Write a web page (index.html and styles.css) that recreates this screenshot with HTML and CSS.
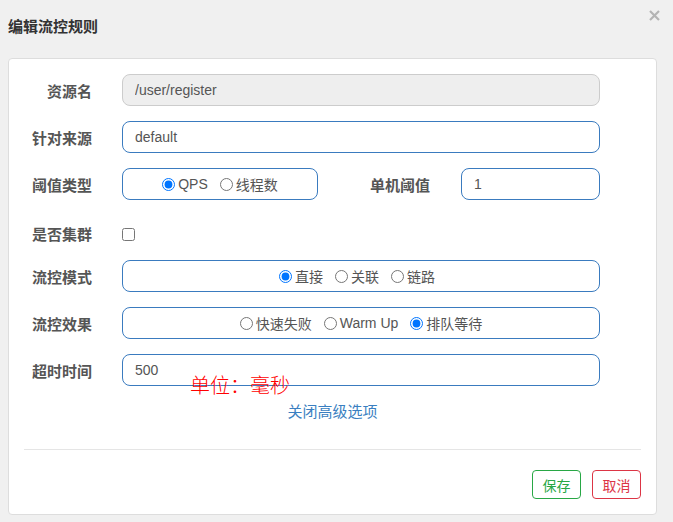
FILE: index.html
```html
<!DOCTYPE html>
<html lang="zh-CN">
<head>
<meta charset="utf-8">
<title>编辑流控规则</title>
<link rel="stylesheet" href="styles.css">
</head>
<body>
<div class="dialog">
  <div class="header">
    <div class="title">编辑流控规则</div>
    <svg class="close" width="11" height="11" viewBox="0 0 11 11"><path d="M1 1 L10 10 M10 1 L1 10" stroke="#b4b4b4" stroke-width="2.2" fill="none"/></svg>
  </div>
  <div class="card">
    <div class="row">
      <label class="label">资源名</label>
      <div class="field"><input class="input disabled" type="text" value="/user/register" disabled></div>
    </div>
    <div class="row">
      <label class="label">针对来源</label>
      <div class="field"><input class="input" type="text" value="default"></div>
    </div>
    <div class="row">
      <label class="label">阈值类型</label>
      <div class="box box-small">
        <label class="opt"><input type="radio" name="t" checked>QPS</label>
        <label class="opt"><input type="radio" name="t">线程数</label>
      </div>
      <label class="label label2">单机阈值</label>
      <input class="input input-small" type="text" value="1">
    </div>
    <div class="row row-check">
      <label class="label">是否集群</label>
      <input class="check" type="checkbox">
    </div>
    <div class="row">
      <label class="label">流控模式</label>
      <div class="box box-wide box-mode">
        <label class="opt"><input type="radio" name="m" checked>直接</label>
        <label class="opt"><input type="radio" name="m">关联</label>
        <label class="opt"><input type="radio" name="m">链路</label>
      </div>
    </div>
    <div class="row">
      <label class="label">流控效果</label>
      <div class="box box-wide">
        <label class="opt"><input type="radio" name="e">快速失败</label>
        <label class="opt"><input type="radio" name="e">Warm Up</label>
        <label class="opt"><input type="radio" name="e" checked>排队等待</label>
      </div>
    </div>
    <div class="row row-last">
      <label class="label">超时时间</label>
      <div class="field">
        <input class="input" type="text" value="500">
        <span class="unit">单位：毫秒</span>
      </div>
    </div>
    <div class="more"><a class="link" href="#">关闭高级选项</a></div>
    <div class="divider"></div>
    <div class="footer">
      <button class="btn btn-save">保存</button>
      <button class="btn btn-cancel">取消</button>
    </div>
  </div>
</div>
</body>
</html>
```

FILE: styles.css
```css
* { box-sizing: border-box; }
html, body { margin: 0; padding: 0; }
body {
  background: #f0f0f0;
  font-family: "Liberation Sans", "Noto Sans CJK SC", sans-serif;
  font-size: 14px;
  color: #555;
  width: 673px;
  height: 522px;
  overflow: hidden;
}
.dialog { padding: 0 0 0 8px; }
.header {
  display: flex;
  justify-content: space-between;
  align-items: flex-start;
  height: 58px;
}
.title {
  margin-top: 18px;
  font-size: 15px;
  line-height: 18px;
  font-weight: bold;
  color: #333;
}
.close { margin-top: 10px; margin-right: 13px; }
.card {
  width: 649px;
  height: 457px;
  background: #fff;
  border: 1px solid #ddd;
  border-radius: 4px;
  padding: 15px 15px;
}
.row {
  display: flex;
  align-items: center;
  height: 32px;
  margin-bottom: 15px;
}
.row-check { height: 33px; padding-top: 3px; margin-bottom: 12px; }
.row-last { margin-bottom: 0; }
.label {
  width: 68px;
  text-align: right;
  font-size: 15px;
  font-weight: bold;
  color: #555;
  margin-right: 30px;
  white-space: nowrap;
}
.label2 { width: 112px; margin-right: 31px; }
.field { position: relative; width: 478px; height: 32px; }
.input {
  width: 478px;
  height: 32px;
  border: 1px solid #3a7bbf;
  border-radius: 8px;
  padding: 0 12px;
  font-family: "Liberation Sans", "Noto Sans CJK SC", sans-serif;
  font-size: 14px;
  color: #555;
  background: #fff;
  outline: none;
}
.input.disabled {
  background: #eee;
  border-color: #ccc;
  color: #555;
}
.input-small { width: 139px; }
.box {
  height: 32px;
  border: 1px solid #3a7bbf;
  border-radius: 8px;
  display: flex;
  align-items: center;
  justify-content: center;
  gap: 12px;
}
.box-small { width: 196px; }
.box-wide { width: 478px; }
.box-mode { padding-right: 8px; }
.opt {
  display: flex;
  align-items: center;
  font-size: 14px;
  color: #555;
  white-space: nowrap;
}
.opt input {
  width: 13px;
  height: 13px;
  margin: 0 3px 0 0;
}
.check { width: 13px; height: 13px; margin: 3px 0 0 0; }
.unit {
  position: absolute;
  left: 68px;
  top: 20px;
  font-size: 20px;
  line-height: 22px;
  font-weight: 300;
  color: #ff0000;
  font-family: "Noto Sans CJK SC", sans-serif;
  white-space: nowrap;
}
.more {
  text-align: center;
  margin-top: 16px;
  height: 20px;
  line-height: 20px;
}
.link {
  color: #3a7fc1;
  font-size: 15px;
  text-decoration: none;
}
.divider {
  height: 1px;
  background: #e5e5e5;
  margin-top: 27px;
}
.footer {
  display: flex;
  justify-content: flex-end;
  gap: 11px;
  margin-top: 20px;
}
.btn {
  width: 49px;
  height: 29px;
  background: #fff;
  border-radius: 4px;
  font-family: "Noto Sans CJK SC", sans-serif;
  font-size: 14px;
  padding: 0;
}
.btn-save { border: 1px solid #28a745; color: #28a745; }
.btn-cancel { border: 1px solid #dc3545; color: #dc3545; }
```
